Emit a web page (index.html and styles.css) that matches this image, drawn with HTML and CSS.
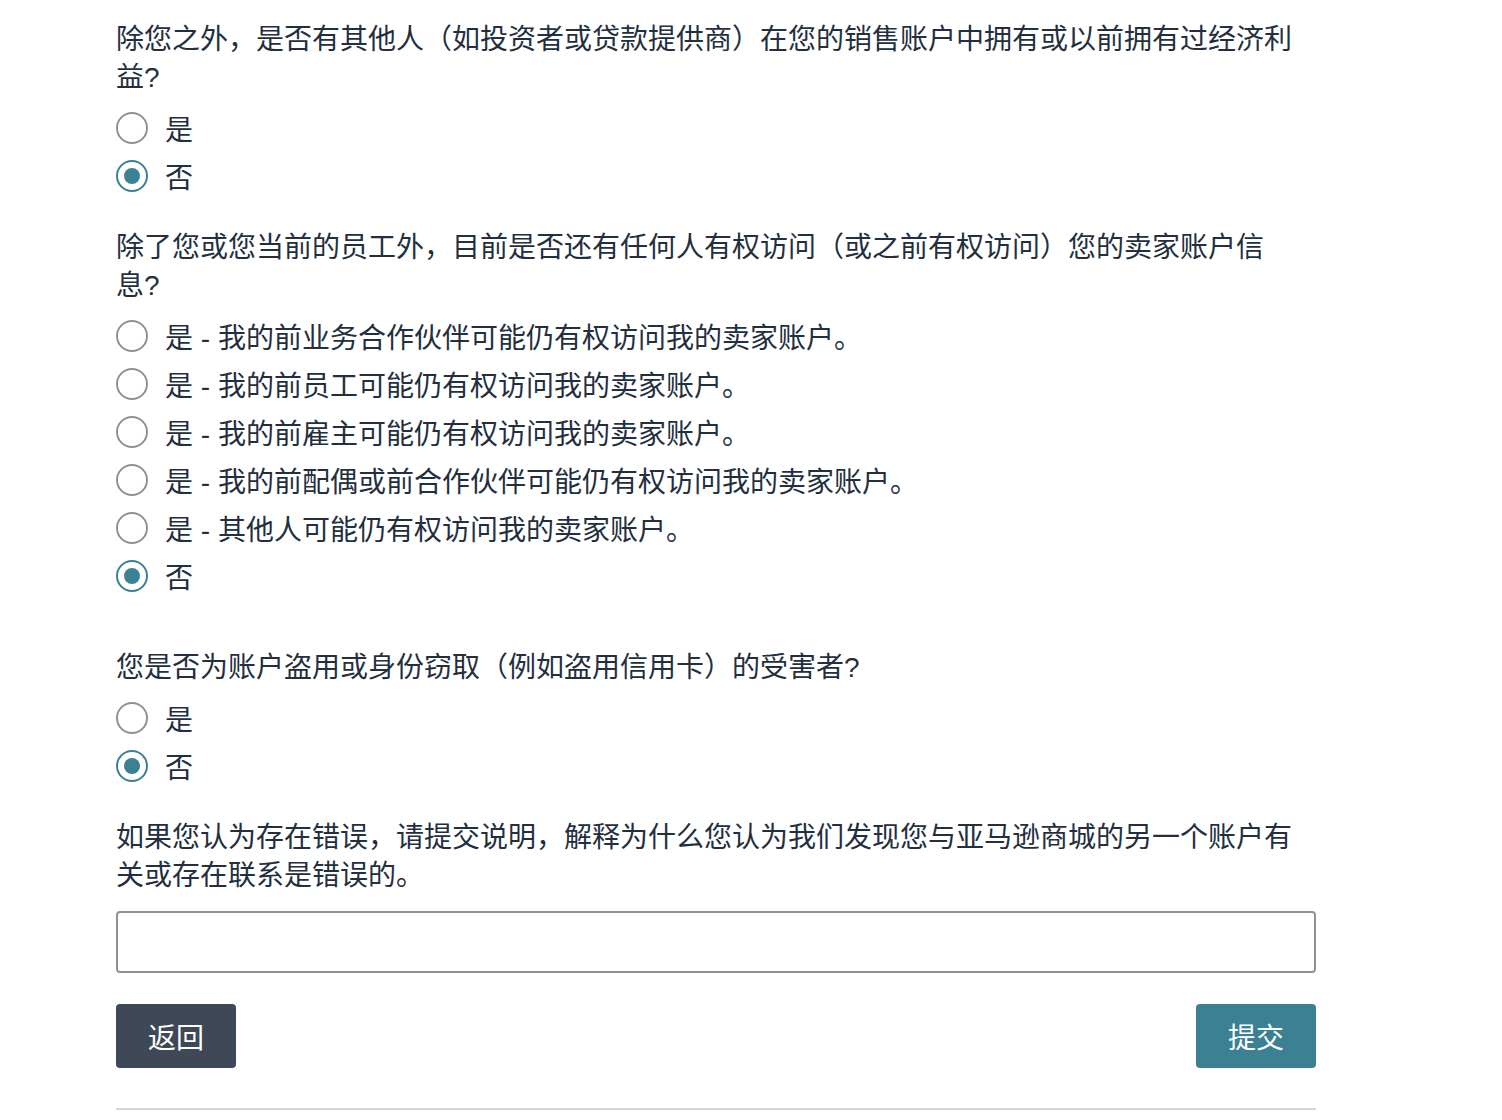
FILE: index.html
```html
<!DOCTYPE html>
<html lang="zh-CN">
<head>
  <meta charset="UTF-8">
  <title>账户关联申诉</title>
  <link rel="stylesheet" href="styles.css">
</head>
<body>
  <form class="appeal-form">
    <div class="question-group">
      <p class="question">除您之外，是否有其他人（如投资者或贷款提供商）在您的销售账户中拥有或以前拥有过经济利益?</p>
      <label class="option"><input type="radio" name="q1"><span>是</span></label>
      <label class="option"><input type="radio" name="q1" checked><span>否</span></label>
    </div>

    <div class="question-group question-group-wide">
      <p class="question">除了您或您当前的员工外，目前是否还有任何人有权访问（或之前有权访问）您的卖家账户信息?</p>
      <label class="option"><input type="radio" name="q2"><span>是 - 我的前业务合作伙伴可能仍有权访问我的卖家账户。</span></label>
      <label class="option"><input type="radio" name="q2"><span>是 - 我的前员工可能仍有权访问我的卖家账户。</span></label>
      <label class="option"><input type="radio" name="q2"><span>是 - 我的前雇主可能仍有权访问我的卖家账户。</span></label>
      <label class="option"><input type="radio" name="q2"><span>是 - 我的前配偶或前合作伙伴可能仍有权访问我的卖家账户。</span></label>
      <label class="option"><input type="radio" name="q2"><span>是 - 其他人可能仍有权访问我的卖家账户。</span></label>
      <label class="option"><input type="radio" name="q2" checked><span>否</span></label>
    </div>

    <div class="question-group">
      <p class="question">您是否为账户盗用或身份窃取（例如盗用信用卡）的受害者?</p>
      <label class="option"><input type="radio" name="q3"><span>是</span></label>
      <label class="option"><input type="radio" name="q3" checked><span>否</span></label>
    </div>

    <div class="question-group">
      <p class="question">如果您认为存在错误，请提交说明，解释为什么您认为我们发现您与亚马逊商城的另一个账户有关或存在联系是错误的。</p>
      <input type="text" class="explain-input">
    </div>

    <div class="form-actions">
      <button type="button" class="btn btn-back">返回</button>
      <button type="submit" class="btn btn-submit">提交</button>
    </div>
    <hr class="divider">
  </form>
</body>
</html>
```

FILE: styles.css
```css
body {
  margin: 0;
  background: #fff;
  color: #232f3e;
  font-family: "Liberation Sans", "Noto Sans CJK SC", sans-serif;
}

.appeal-form {
  width: 1200px;
  margin-left: 116px;
  padding-top: 21px;
}

.question-group {
  margin-bottom: 29px;
}

.question-group-wide {
  margin-bottom: 49px;
}

.question {
  margin: 0 0 7px;
  max-width: 1180px;
  font-size: 28px;
  line-height: 38px;
}

.option {
  display: flex;
  align-items: center;
  height: 48px;
  font-size: 28px;
  cursor: pointer;
}

.option input {
  appearance: none;
  -webkit-appearance: none;
  width: 32px;
  height: 32px;
  margin: 0 17px 0 0;
  border: 2px solid #8e9298;
  border-radius: 50%;
  box-sizing: border-box;
  display: flex;
  align-items: center;
  justify-content: center;
  flex-shrink: 0;
}

.option input:checked {
  border-color: #3b8093;
}

.option input:checked::after {
  content: "";
  width: 16px;
  height: 16px;
  border-radius: 50%;
  background: #3b8093;
}

.explain-input {
  display: block;
  width: 100%;
  height: 62px;
  margin-top: 16px;
  border: 2px solid #8e9298;
  border-radius: 4px;
  box-sizing: border-box;
  font-size: 24px;
  padding: 0 14px;
}

.form-actions {
  display: flex;
  justify-content: space-between;
  margin-top: -29px;
  padding-top: 31px;
}

.btn {
  width: 120px;
  height: 64px;
  border: none;
  border-radius: 4px;
  color: #fff;
  font-family: inherit;
  font-size: 28px;
  cursor: pointer;
}

.btn-back {
  background: #3f4856;
}

.btn-submit {
  background: #3b8093;
}

.divider {
  margin: 40px 0 0;
  border: none;
  height: 2px;
  background: #d5d5d5;
}
```
